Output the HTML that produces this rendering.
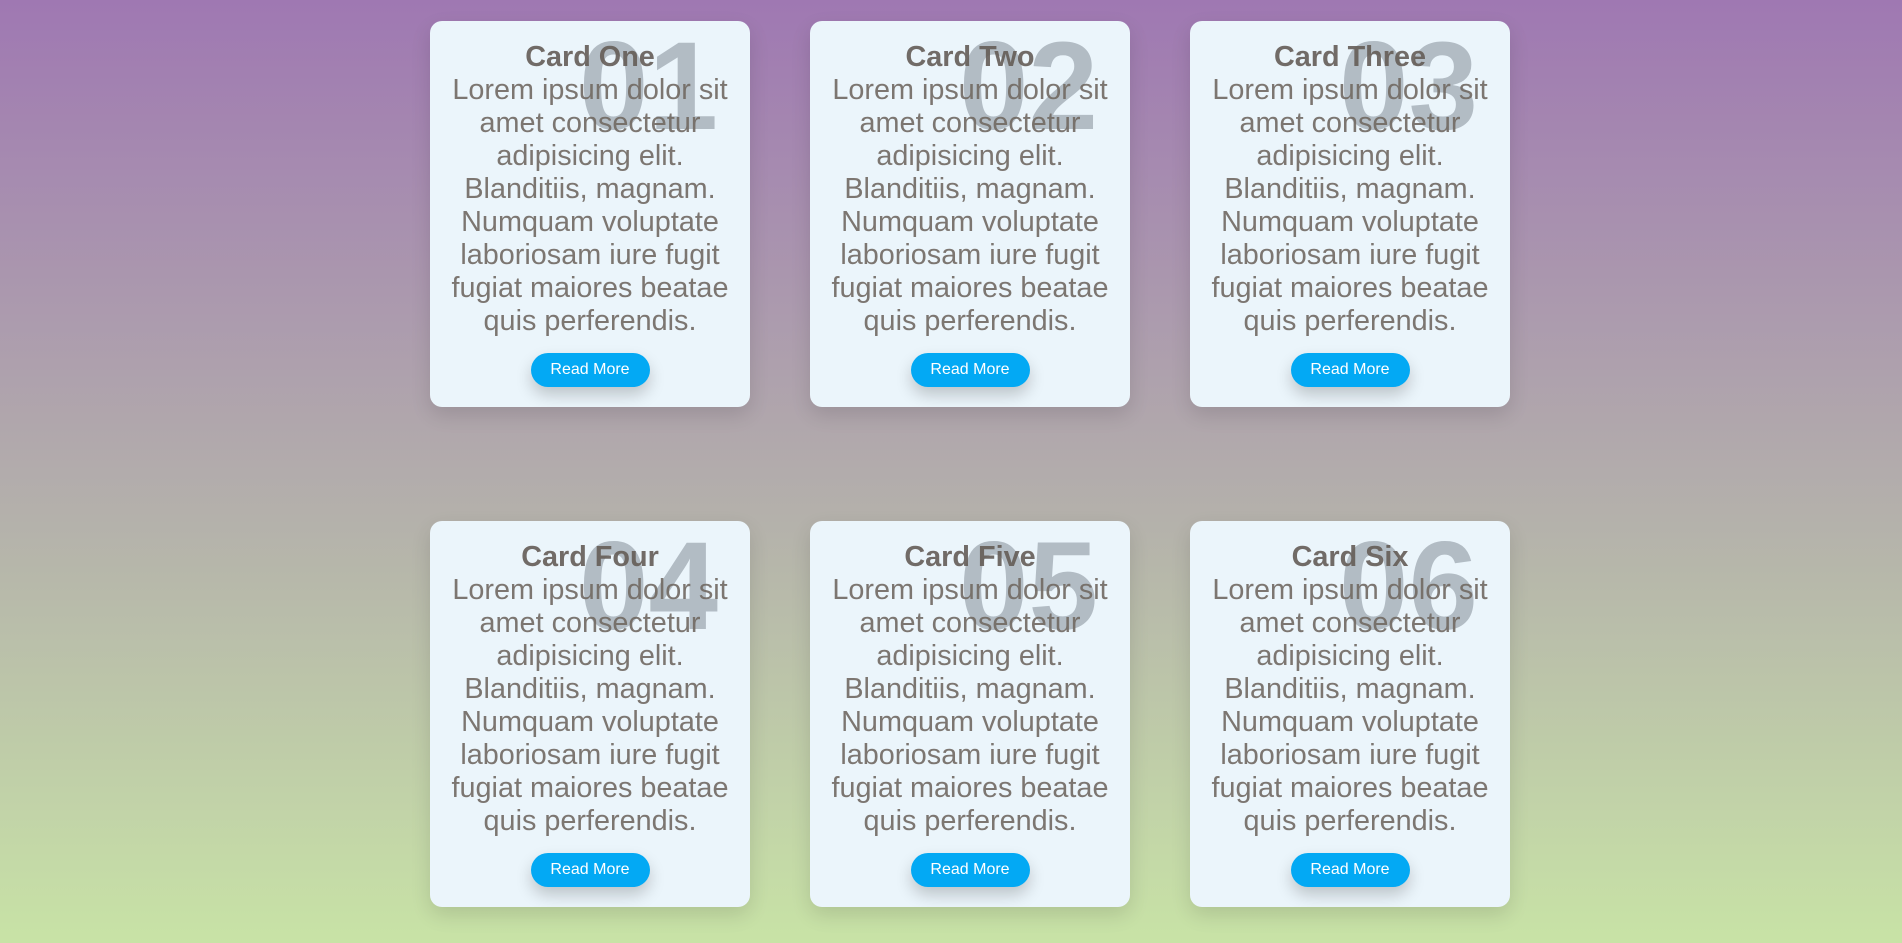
<!DOCTYPE html>
<html><head><meta charset="utf-8"><style>
html,body{margin:0;padding:0;}
body{width:1902px;height:943px;overflow:hidden;background:linear-gradient(#9f78b2,#b4b1ab 55%,#c8e3a6);font-family:"Liberation Sans",sans-serif;position:relative;}
.card{position:absolute;width:320px;height:386px;background:#ebf5fb;border-radius:12px;box-shadow:0 8px 20px rgba(0,0,0,0.12);box-sizing:border-box;padding:20px 20px;text-align:center;overflow:hidden;}
.num{position:absolute;right:32px;top:3px;font-size:125px;line-height:1;font-weight:bold;color:rgba(140,150,160,0.6);}
h3{position:relative;margin:0;font-size:28.8px;line-height:33px;color:rgba(100,92,86,0.9);font-weight:bold;}
p{position:relative;margin:0;font-size:28.8px;line-height:33px;color:rgba(112,104,98,0.9);}
.btn{position:relative;display:inline-block;margin-top:15px;width:119px;height:34px;line-height:34px;border-radius:17px;background:#03a9f4;color:#fff;font-size:16px;box-shadow:0 8px 16px rgba(0,0,0,0.2);}
</style></head><body>
<div class="card" style="left:430px;top:21px"><div class="num">01</div><h3>Card One</h3><p>Lorem ipsum dolor sit amet consectetur adipisicing elit. Blanditiis, magnam. Numquam voluptate laboriosam iure fugit fugiat maiores beatae quis perferendis.</p><span class="btn">Read More</span></div>
<div class="card" style="left:810px;top:21px"><div class="num">02</div><h3>Card Two</h3><p>Lorem ipsum dolor sit amet consectetur adipisicing elit. Blanditiis, magnam. Numquam voluptate laboriosam iure fugit fugiat maiores beatae quis perferendis.</p><span class="btn">Read More</span></div>
<div class="card" style="left:1190px;top:21px"><div class="num">03</div><h3>Card Three</h3><p>Lorem ipsum dolor sit amet consectetur adipisicing elit. Blanditiis, magnam. Numquam voluptate laboriosam iure fugit fugiat maiores beatae quis perferendis.</p><span class="btn">Read More</span></div>
<div class="card" style="left:430px;top:521px"><div class="num">04</div><h3>Card Four</h3><p>Lorem ipsum dolor sit amet consectetur adipisicing elit. Blanditiis, magnam. Numquam voluptate laboriosam iure fugit fugiat maiores beatae quis perferendis.</p><span class="btn">Read More</span></div>
<div class="card" style="left:810px;top:521px"><div class="num">05</div><h3>Card Five</h3><p>Lorem ipsum dolor sit amet consectetur adipisicing elit. Blanditiis, magnam. Numquam voluptate laboriosam iure fugit fugiat maiores beatae quis perferendis.</p><span class="btn">Read More</span></div>
<div class="card" style="left:1190px;top:521px"><div class="num">06</div><h3>Card Six</h3><p>Lorem ipsum dolor sit amet consectetur adipisicing elit. Blanditiis, magnam. Numquam voluptate laboriosam iure fugit fugiat maiores beatae quis perferendis.</p><span class="btn">Read More</span></div>
</body></html>
